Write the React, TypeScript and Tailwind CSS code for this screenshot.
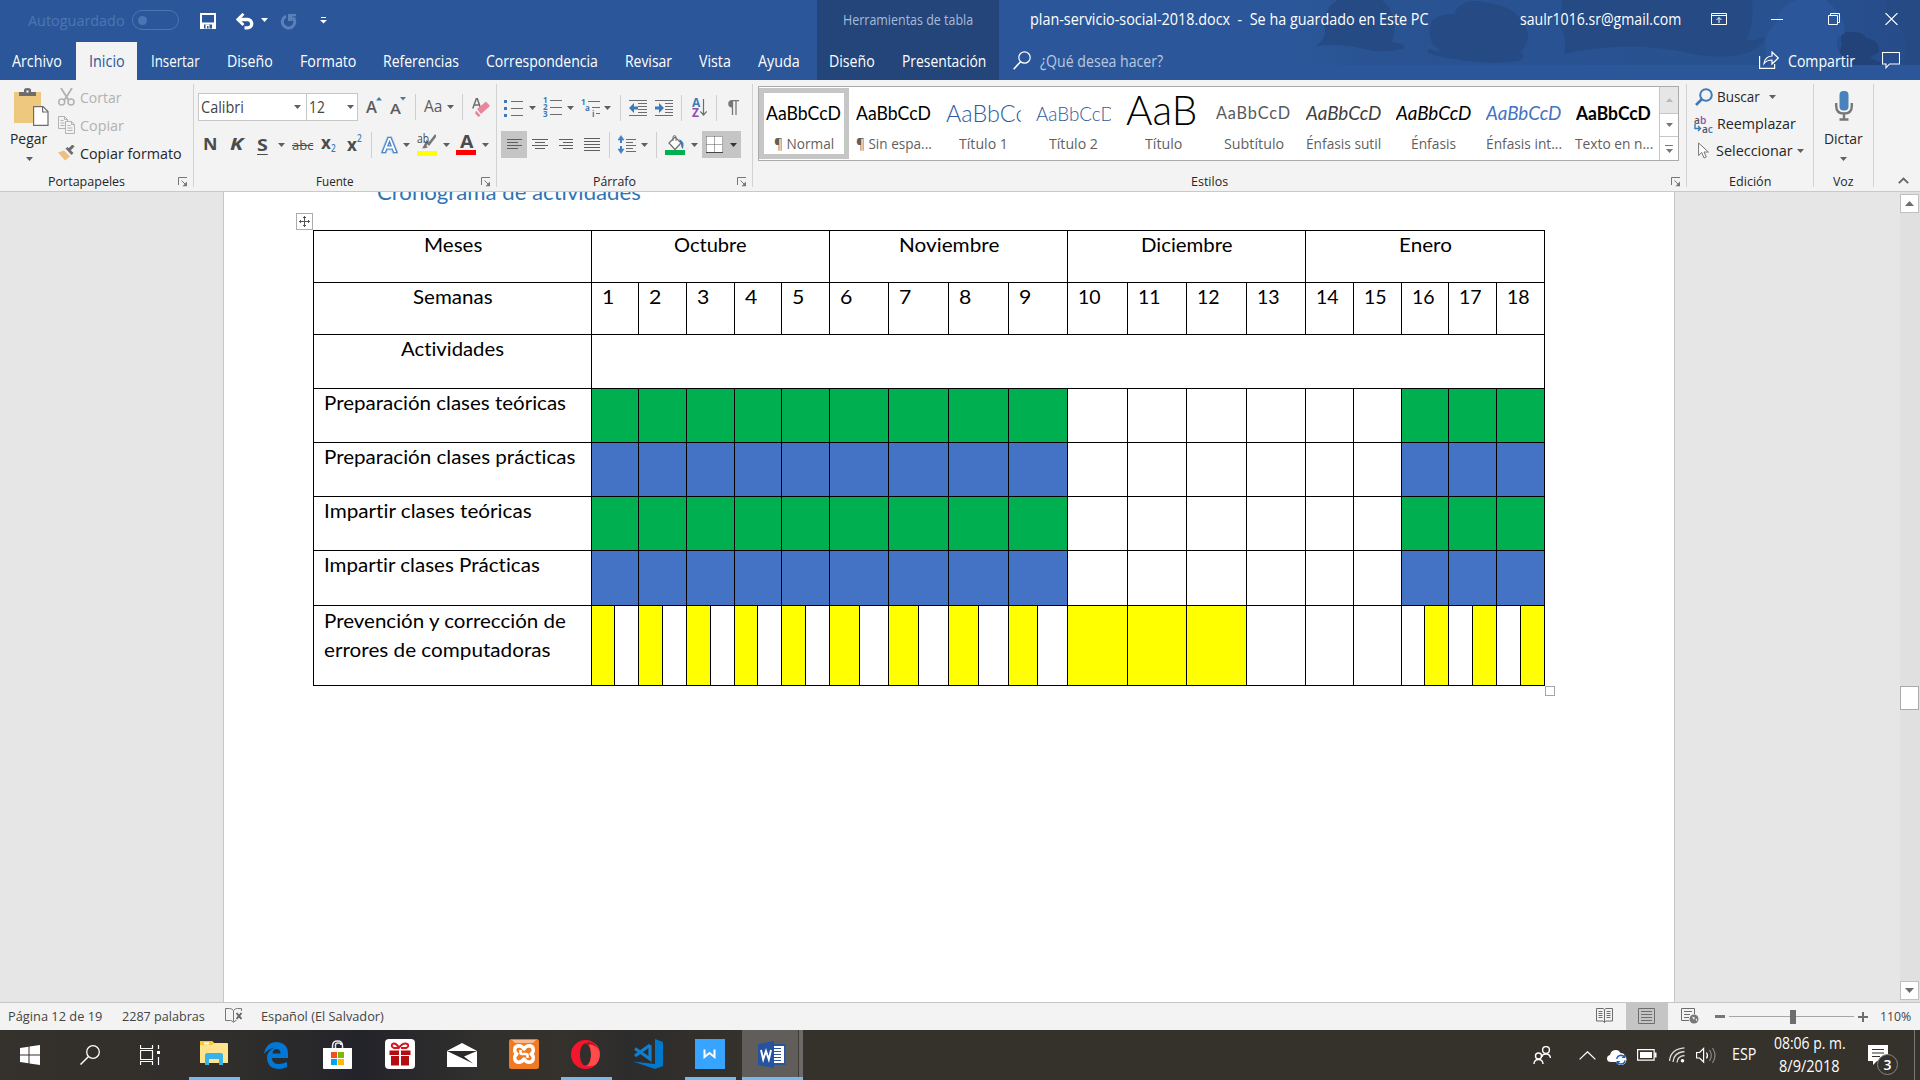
import { useLayoutEffect, useRef, useState, type ReactNode } from "react";

/** Single line of text, condensed or widened to an exact measure. */
function T({ w, children, className = "", inner = "" }: { w: number; children: ReactNode; className?: string; inner?: string }) {
  const ref = useRef<HTMLSpanElement>(null);
  const [scale, setScale] = useState(1);
  useLayoutEffect(() => {
    if (ref.current) setScale(w / ref.current.offsetWidth);
  }, [w]);
  return (
    <span className={"block shrink-0 whitespace-pre " + className} style={{ width: w }}>
      <span ref={ref} className={"inline-block origin-left " + inner} style={{ transform: `scaleX(${scale})` }}>
        {children}
      </span>
    </span>
  );
}

function Caret({ className = "", fill = "#5f5f5f" }: { className?: string; fill?: string }) {
  return (
    <svg width="7" height="4" viewBox="0 0 7 4" className={"shrink-0 " + className}>
      <path d="M0 0h7L3.5 4z" fill={fill} />
    </svg>
  );
}

function Svg({ w, h, className = "", children }: { w: number; h: number; className?: string; children: ReactNode }) {
  return (
    <svg width={w} height={h} viewBox={`0 0 ${w} ${h}`} fill="none" className={"shrink-0 " + className}>
      {children}
    </svg>
  );
}

const Bar = ({ className = "" }: { className?: string }) => (
  <div className={"h-[26px] w-px shrink-0 bg-[#cfcfcf] " + className} />
);
const Divider = () => <div className="mt-1 h-[103px] w-px shrink-0 bg-[#d2d2d2]" />;

function Group({ width, label, labelW, launcher = true, children }: { width: string; label: string; labelW: number; launcher?: boolean; children: ReactNode }) {
  return (
    <div className={"flex shrink-0 flex-col " + width}>
      <div className="h-[92px]">{children}</div>
      <div className="flex h-[19px] items-center">
        <div className="flex flex-1 justify-center">
          <T w={labelW} className="text-[13.5px] leading-[19px] text-[#262626]">{label}</T>
        </div>
        {launcher && (
          <div className="flex w-5 pl-[5px]">
            <Svg w={10} h={10}>
              <path d="M.5 8V.5H9M3.500 3.500l4.500 4.500" stroke="#777" />
              <path d="M9 4.500V9.200H4.500z" fill="#777" />
            </Svg>
          </div>
        )}
      </div>
    </div>
  );
}

function TitleArt() {
  return (
    <svg className="absolute right-0 top-0" width="640" height="65" viewBox="0 0 640 65">
      <defs>
        <linearGradient id="art" x1="0" x2="1">
          <stop offset="0" stopColor="#2b579a" />
          <stop offset=".15" stopColor="#295392" />
          <stop offset=".8" stopColor="#285190" />
          <stop offset="1" stopColor="#264c88" />
        </linearGradient>
      </defs>
      <rect width="640" height="65" fill="url(#art)" />
      <g fill="#254a84">
        <path d="M36 46q12-8 8-22 0-16 14-24h44q18 16 10 42 14 2 12 6-18 6-40 1-22-6-48-3z" />
        <path d="M150 36q-4-22 24-22 8-18 34-11 34 4 40 32 0 10-8 17 8 4-2 9-34 5-80-5-14-4-9-7 8 3 14 3-12-6-13-16z" />
        <path d="M282 0h190q2 26-6 40 10 2 18-4 2 10-20 18-26 6-60-2-60-12-120 2 4-18-4-26z" />
        <path d="M562 44q-4-14 10-12 12 0 14 6 14 2 13 14l-10 6q14 4 12 7h-38q-10-6-4-12z" fill="#21437a" />
        <path d="M606 0h34v65h-18q12-20-2-38-16-12-14-27z" />
      </g>
      <path d="M488 65q-8-30 8-42 4-18 20-23h30q22 20 18 34-10 2-6 16l10 15z" fill="#2b579a" />
    </svg>
  );
}

const TABS: [string, number, string][] = [
  ["Insertar", 49, "ml-[14px]"],
  ["Diseño", 46, "ml-[27px]"],
  ["Formato", 56, "ml-[27px]"],
  ["Referencias", 76, "ml-[27px]"],
  ["Correspondencia", 112, "ml-[27px]"],
  ["Revisar", 47, "ml-[27px]"],
  ["Vista", 32, "ml-[27px]"],
  ["Ayuda", 42, "ml-[27px]"],
];

function Header() {
  return (
    <header className="relative h-20 bg-[#2b579a] text-white">
      <TitleArt />
      <div className="relative flex h-10">
        <div className="flex w-[817px] items-center">
          <T w={97} className="ml-7 text-[15px] text-[#4b76b3]">Autoguardado</T>
          <div className="ml-[7px] flex h-5 w-[47px] items-center rounded-full border border-[#4b76b3] pl-[5px]">
            <div className="size-[9px] rounded-full bg-[#4b76b3]" />
          </div>
          <Svg w={16} h={16} className="ml-[21px] mt-0.5">
            <path d="M1 1h14v14H1z" stroke="#fff" strokeWidth="2" />
            <path d="M1 9.500h14V16H1z" fill="#fff" />
            <path d="M4 11.500h8v4H4z" fill="#2b579a" />
            <path d="M5.500 11.500h4v4h-1v-2.500H7v2.500H5.500z" fill="#fff" />
          </Svg>
          <Svg w={19} h={17} className="ml-5 mt-0.5">
            <path d="M2 6.500h9.500a4.200 4.200 0 0 1 0 8.400H8.500" stroke="#fff" strokeWidth="3.400" />
            <path d="M7.500.8L1.800 6.500L7.500 12" stroke="#fff" strokeWidth="2.800" />
          </Svg>
          <Caret className="ml-[6px]" fill="#fff" />
          <Svg w={17} h={17} className="ml-[12px] mt-0.5">
            <path d="M6 3.200A6.200 6.200 0 1 0 13 4.500" stroke="#5b81b9" strokeWidth="3" />
            <path d="M8 1h8v2.200h-3.500V8H8z" fill="#5b81b9" />
          </Svg>
          <Svg w={7} h={7} className="ml-[23px]">
            <path d="M1 .5h5" stroke="#fff" /><path d="M0 3h7L3.500 6.500z" fill="#fff" />
          </Svg>
        </div>
        <div className="flex w-[182px] items-center justify-center bg-[#23457a]">
          <T w={130} className="-mt-[2px] text-[14px] text-[#a9bbd8]">Herramientas de tabla</T>
        </div>
        <div className="flex flex-1 items-center">
          <T w={399} className="ml-[31px] text-[15.5px]">plan-servicio-social-2018.docx  -  Se ha guardado en Este PC</T>
          <T w={161} className="ml-[91px] text-[15.5px]">saulr1016.sr@gmail.com</T>
          <Svg w={16} h={12} className="-mt-[2px] ml-[30px]">
            <path d="M.5.5h15v11H.5zM.5 2.500h15M8 10V4.500M5.500 7L8 4.500L10.500 7" stroke="#fff" />
          </Svg>
          <div className="-mt-[2px] ml-[44px] h-px w-3 bg-white" />
          <Svg w={12} h={12} className="-mt-[2px] ml-[45px]">
            <path d="M.5 2.500h9v9h-9zM2.500 2V.5h9v9H10" stroke="#fff" />
          </Svg>
          <Svg w={13} h={12} className="-mt-[2px] ml-[45px]">
            <path d="M.5 0l12 12M12.500 0l-12 12" stroke="#fff" strokeWidth="1.100" />
          </Svg>
        </div>
      </div>
      <div className="relative flex h-10 text-[16px]">
        <div className="flex w-[817px] items-center">
          <T w={50} className="ml-3 mt-px">Archivo</T>
          <div className="ml-[14px] mt-[2px] flex h-[38px] w-[61px] items-center justify-center bg-[#f3f3f3] text-[#2b579a]">
            <T w={36} className="-mt-px">Inicio</T>
          </div>
          {TABS.map(([name, w, ml]) => (
            <div key={name} className={"mt-px " + ml}><T w={w}>{name}</T></div>
          ))}
        </div>
        <div className="flex w-[182px] items-center bg-[#23457a]">
          <T w={46} className="ml-3 mt-px">Diseño</T>
          <T w={84} className="ml-[27px] mt-px">Presentación</T>
        </div>
        <div className="flex flex-1 items-center">
          <Svg w={18} h={19} className="ml-[14px]">
            <circle cx="11.500" cy="6.500" r="5.700" stroke="#fff" strokeWidth="1.200" />
            <path d="M7.500 10.700L.7 18.300" stroke="#fff" strokeWidth="1.500" />
          </Svg>
          <T w={123} className="ml-[9px] mt-[3px] text-[15.5px] text-[#b8c8e0]">¿Qué desea hacer?</T>
          <Svg w={20} h={18} className="ml-[596px]">
            <path d="M.6 5v12.400h15V13" stroke="#fff" strokeWidth="1.200" />
            <path d="M5 12.500q1-7 8-7.500V1l6.300 6L13 13V9q-5 0-8 3.500z" stroke="#fff" strokeWidth="1.200" />
          </Svg>
          <T w={67} className="ml-[9px] mt-px">Compartir</T>
          <Svg w={18} h={17} className="ml-[27px]">
            <path d="M.5.5h17v11.500H7.500L4 15.800V12H.5z" stroke="#fff" strokeWidth="1.100" />
          </Svg>
        </div>
      </div>
    </header>
  );
}

function Clipboard() {
  return (
    <Group width="w-[193px]" label="Portapapeles" labelW={77}>
      <div className="flex">
        <div className="flex w-[58px] flex-col items-center">
          <Svg w={35} h={38} className="ml-[5px] mt-2">
            <path d="M0 4h27v31H0z" fill="#edc87e" />
            <path d="M5 8V4h5V2q0-2 3.500-2T17 2v2h5v4z" fill="#6d6d6d" />
            <path d="M12.500 2.500h2v2h-2z" fill="#fff" />
            <path d="M19.600 18.600h9.400l5 5v13.800H19.600z" fill="#fff" stroke="#6d6d6d" strokeWidth="1.200" />
            <path d="M28.600 18.600v5.400h5.400" stroke="#6d6d6d" strokeWidth="1.200" />
          </Svg>
          <T w={37} className="mr-[1px] mt-px text-[15px] leading-[22px] text-[#262626]">Pegar</T>
          <Caret className="mt-[8px]" />
        </div>
        <div className="mt-[3px] flex flex-col text-[15px] text-[#b1b1b1]">
          <div className="flex h-7 items-center">
            <Svg w={17} h={18}>
              <path d="M3 0l7.500 12M14 0L6.500 12" stroke="#b1b1b1" strokeWidth="1.800" />
              <circle cx="3.700" cy="14" r="3" stroke="#b1b1b1" strokeWidth="1.500" />
              <circle cx="13" cy="14" r="3" stroke="#b1b1b1" strokeWidth="1.500" />
            </Svg>
            <T w={41} className="ml-[5px]">Cortar</T>
          </div>
          <div className="flex h-7 items-center">
            <Svg w={17} h={18}>
              <path d="M7 12.500H.5V.5h6l3 3V5M6.500.5v3h3M2.500 4.500h3M2.500 7h4M2.500 9.500h4" stroke="#b4b0b6" />
              <path d="M7.500 5.500h6l3 3v9h-9zM13.500 5.500v3h3M9.500 9.500h3M9.500 12h5M9.500 14.500h5" stroke="#b4b0b6" fill="#f6f3f7" />
            </Svg>
            <T w={44} className="ml-[5px]">Copiar</T>
          </div>
          <div className="flex h-7 items-center text-[#262626]">
            <Svg w={17} h={16}>
              <path d="M0 7.500L6 5.500L12 11.500L7 15.500z" fill="#edc080" />
              <path d="M7.500 3.500L9.500 2l6 6l-2 2z" fill="#6d6d6d" />
              <path d="M10.500 5.500l5-5" stroke="#6d6d6d" strokeWidth="3" />
            </Svg>
            <T w={102} className="ml-[5px]">Copiar formato</T>
          </div>
        </div>
      </div>
    </Group>
  );
}

function FontGroup() {
  return (
    <Group width="w-[302px]" label="Fuente" labelW={38}>
      <div className="flex h-[41px] items-end">
        <div className="flex h-7 w-full items-center text-[#5c5c5c]">
          <div className="ml-1 flex h-7 w-[109px] items-center border border-[#c6c6c6] bg-white">
            <T w={43} className="ml-[2px] mt-px text-[15.5px] text-[#444]">Calibri</T>
            <Caret className="ml-[50px]" />
          </div>
          <div className="-ml-px flex h-7 w-[52px] items-center border border-[#c6c6c6] bg-white">
            <T w={16} className="ml-[2px] mt-px text-[15.5px] text-[#444]">12</T>
            <Caret className="ml-[22px]" />
          </div>
          <T w={11} className="ml-[8px] text-[16.500px] font-semibold">A</T>
          <Svg w={6} h={4} className="-ml-px -mt-[16px]"><path d="M0 3.500L3 0L6 3.500z" fill="#3f7ab8" /></Svg>
          <T w={11} className="ml-[8px] mt-[2px] text-[15px] font-semibold">A</T>
          <Svg w={6} h={4} className="-ml-px -mt-[16px]"><path d="M0 0h6L3 3.500z" fill="#3f7ab8" /></Svg>
          <Bar className="ml-[9px]" />
          <T w={18} className="ml-[8px] text-[15.500px]">Aa</T>
          <Caret className="ml-[5px]" />
          <Bar className="ml-[8px]" />
          <Svg w={18} h={19} className="ml-[9px]">
            <path d="M.8 10.500L4.300.8h1L8.500 10M2 7h5.500" stroke="#6d6d6d" strokeWidth="1.500" />
            <path d="M5 11l9-7.500 4 4.500-9 8z" fill="#e8879a" />
            <path d="M4 12.500l4.500 5-2 1.500-3.500-3.500z" fill="#e8879a" />
          </Svg>
        </div>
      </div>
      <div className="mt-[10px] flex h-[27px] items-center text-[#4c4c4c]">
        <T w={14} className="ml-[9px] text-[16.500px] font-bold">N</T>
        <T w={13} className="ml-[13px] text-[16.500px] font-bold italic">K</T>
        <T w={11} className="ml-[14px] text-[16px] font-bold" inner="underline underline-offset-[3px]">S</T>
        <Caret className="ml-[10px]" />
        <T w={21} className="ml-[7px] mt-[2px] text-[13px]" inner="line-through">abc</T>
        <div className="ml-[8px] flex">
          <T w={10} className="text-[17px] font-bold leading-5">x</T>
          <T w={5} className="mt-[7px] text-[10px] font-semibold leading-4 text-[#3f7ab8]">2</T>
        </div>
        <div className="ml-[11px] flex">
          <T w={10} className="text-[17px] font-bold leading-5">x</T>
          <T w={5} className="-mt-[5px] text-[10px] font-semibold leading-4 text-[#3f7ab8]">2</T>
        </div>
        <Bar className="ml-[9px]" />
        <Svg w={17} h={18} className="ml-[9px]">
          <path d="M1 16.500L7 1.500h3l6 15h-3.500L11.300 13H5.700L4.500 16.500zM6.800 10h3.400L8.500 5.500z" stroke="#b9d4f0" strokeWidth="2.800" />
          <path d="M1 16.500L7 1.500h3l6 15h-3.500L11.300 13H5.700L4.500 16.500zM6.800 10h3.400L8.500 5.500z" stroke="#4c86c6" strokeWidth="1.200" fill="#fff" />
        </Svg>
        <Caret className="ml-[5px]" />
        <div className="ml-[7px] flex h-[22px] w-5 flex-col">
          <div className="flex h-[15px]">
            <T w={12} className="text-[13px] leading-[8px]">ab</T>
            <Svg w={14} h={15} className="-ml-[7px]">
              <path d="M2 14L5 8l2 2L14 1" stroke="#777" strokeWidth="2.600" /><path d="M0 14.500l3-4 3 3z" fill="#777" />
            </Svg>
          </div>
          <div className="mt-[2px] h-[5px] bg-[#ffff00]" />
        </div>
        <Caret className="ml-[6px]" />
        <div className="ml-[6px] flex h-[20px] w-5 flex-col items-center">
          <T w={13} className="h-[15px] text-[18px] font-bold leading-[12px]">A</T>
          <div className="h-[5px] w-5 shrink-0 bg-[#ff0000]" />
        </div>
        <Caret className="ml-[6px]" />
      </div>
    </Group>
  );
}

function AlignIcon({ w, d }: { w: number; d: string }) {
  return <Svg w={w} h={13}><path d={d} stroke="#5f5f5f" strokeWidth="1" /></Svg>;
}

function Paragraph() {
  return (
    <Group width="w-[255px]" label="Párrafo" labelW={43}>
      <div className="flex h-[54px] items-center pt-px">
        <Svg w={19} h={18} className="ml-[7px]">
          <path d="M7 2.500h12M7 9.500h12M7 16.500h12" stroke="#6d6d6d" />
          <path d="M0 1h3v3H0zM0 8h3v3H0zM0 15h3v3H0z" fill="#3f7ab8" />
        </Svg>
        <Caret className="ml-[6px]" />
        <div className="ml-[7px] flex w-[19px] items-center">
          <div className="flex flex-col text-[8px] font-bold leading-[6.700px] text-[#3f7ab8]"><span>1</span><span>2</span><span>3</span></div>
          <Svg w={12} h={18} className="ml-[2px]"><path d="M0 2.500h12M0 9.500h12M0 16.500h12" stroke="#6d6d6d" /></Svg>
        </div>
        <Caret className="ml-[5px]" />
        <div className="ml-[7px] flex w-[19px] flex-col text-[8px] font-bold leading-[6px] text-[#3f7ab8]">
          <div className="flex items-center">1<span className="ml-[2px] h-px w-3 bg-[#6d6d6d]" /></div>
          <div className="ml-[4px] flex items-center">a<span className="ml-[2px] h-px w-2 bg-[#6d6d6d]" /></div>
          <div className="ml-[11px] flex items-center">i<span className="ml-[2px] h-px w-1 bg-[#6d6d6d]" /></div>
        </div>
        <Caret className="ml-[4px]" />
        <Bar className="ml-[9px]" />
        <Svg w={18} h={16} className="ml-[8px]">
          <path d="M0 .5h18M9 3.500h9M9 6.500h9M9 9.500h9M9 12.500h9M0 15.500h18" stroke="#6d6d6d" />
          <path d="M0 8L5 3v3.500h4v3H5V13z" fill="#3f7ab8" />
        </Svg>
        <Svg w={18} h={16} className="ml-[8px]">
          <path d="M0 .5h18M10 3.500h8M10 6.500h8M10 9.500h8M10 12.500h8M0 15.500h18" stroke="#6d6d6d" />
          <path d="M9 8L4 3v3.500H0v3h4V13z" fill="#3f7ab8" />
        </Svg>
        <Bar className="ml-[8px]" />
        <div className="ml-[10px] flex w-4 items-center">
          <div className="flex flex-col text-[12px] font-bold leading-[9.500px]">
            <span className="text-[#3f7ab8]">A</span><span className="text-[#8e4fae]">Z</span>
          </div>
          <Svg w={7} h={17}><path d="M3.500 0v16M.3 12.500l3.200 3.500 3.200-3.500" stroke="#6d6d6d" strokeWidth="1.200" /></Svg>
        </div>
        <Bar className="ml-[8px]" />
        <Svg w={12} h={15} className="ml-[10px]">
          <path d="M5 7.500a3.500 3.500 0 0 1 0-7.500h7v1.300H5z" fill="#777" />
          <path d="M5.500 1v14M9 1v14" stroke="#777" strokeWidth="1.300" />
        </Svg>
      </div>
      <div className="-mt-[3px] flex h-[27px] items-center">
        <div className="ml-1 flex h-[27px] w-[26px] items-center justify-center bg-[#c5c5c5]">
          <AlignIcon w={15} d="M0 1.500h15M0 4.500h11M0 7.500h15M0 10.500h11" />
        </div>
        <div className="ml-[5px]"><AlignIcon w={16} d="M0 1.500h16M3 4.500h10M0 7.500h16M3 10.500h10" /></div>
        <div className="ml-[11px]"><AlignIcon w={14} d="M0 1.500h14M4 4.500h10M0 7.500h14M4 10.500h10" /></div>
        <div className="ml-[11px]"><AlignIcon w={16} d="M0 .5h16M0 3.500h16M0 6.500h16M0 9.500h16M0 12.500h16" /></div>
        <Bar className="ml-[9px]" />
        <Svg w={18} h={19} className="ml-[8px]">
          <path d="M8 4.500h10M8 7.500h7M8 10.500h10M8 13.500h7M8 16.500h10" stroke="#6d6d6d" />
          <path d="M3 3v5M3 11v5" stroke="#4480c4" strokeWidth="2" />
          <path d="M0 5L3 .5l3 4.500zM0 14h6l-3 4.500z" fill="#4480c4" stroke="#4480c4" strokeWidth=".6" />
        </Svg>
        <Caret className="ml-[5px]" />
        <Bar className="ml-[8px]" />
        <Svg w={20} h={20} className="ml-[8px]">
          <path d="M0 15h20v5H0z" fill="#00b050" />
          <path d="M4 8l6-6 6 6-6 6.500z" fill="#fff" stroke="#6d6d6d" strokeWidth="1.200" />
          <path d="M8 6V1.500q1.500-2 3 0V6" stroke="#6d6d6d" />
          <path d="M14 4q6 2 4 10-2-1-2-5z" fill="#3f7ab8" />
        </Svg>
        <Caret className="ml-[6px]" />
        <div className="ml-[4px] flex h-[27px] w-[39px] items-center bg-[#c5c5c5]">
          <Svg w={17} h={17} className="ml-[4px]">
            <path d="M0 0h17v17H0z" fill="#fff" />
            <path d="M.5.5h16v16M.5.5v16M8.500.5v16M.5 8.500h16" stroke="#555" strokeDasharray="1 1" />
            <path d="M0 16.500h17" stroke="#444" />
          </Svg>
          <Caret className="ml-[7px]" fill="#333" />
        </div>
      </div>
    </Group>
  );
}

const STYLES: { name: string; nameW: number; text: string; w: number; cls: string }[] = [
  { name: "¶ Normal", nameW: 60, text: "AaBbCcD", w: 75, cls: "text-[19.5px] text-black font-['Lato',sans-serif]" },
  { name: "¶ Sin espa...", nameW: 76, text: "AaBbCcD", w: 75, cls: "text-[19.5px] text-black font-['Lato',sans-serif]" },
  { name: "Título 1", nameW: 49, text: "AaBbCc", w: 80, cls: "text-[24px] text-[#2f5aa0] font-['Lato',sans-serif] font-light" },
  { name: "Título 2", nameW: 49, text: "AaBbCcD", w: 79, cls: "text-[20.5px] text-[#2f5aa0] font-['Lato',sans-serif] font-light" },
  { name: "Título", nameW: 37, text: "AaB", w: 71, cls: "-mt-[7px] text-[41px] text-black font-['Lato',sans-serif] font-light" },
  { name: "Subtítulo", nameW: 60, text: "AaBbCcD", w: 75, cls: "text-[16.5px] text-[#5a5a5a] tracking-wider font-['Lato',sans-serif]" },
  { name: "Énfasis sutil", nameW: 75, text: "AaBbCcDc", w: 84, cls: "text-[19.5px] text-[#404040] italic font-['Lato',sans-serif]" },
  { name: "Énfasis", nameW: 45, text: "AaBbCcDc", w: 84, cls: "text-[19.5px] text-black italic font-['Lato',sans-serif]" },
  { name: "Énfasis int...", nameW: 76, text: "AaBbCcDc", w: 84, cls: "text-[19.5px] text-[#4472c4] italic font-['Lato',sans-serif]" },
  { name: "Texto en n...", nameW: 78, text: "AaBbCcD", w: 75, cls: "text-[19.5px] text-black font-bold font-['Lato',sans-serif]" },
];

function StylesGroup() {
  return (
    <Group width="w-[933px]" label="Estilos" labelW={37}>
      <div className="h-1.5" />
      <div className="ml-[5px] flex h-[75px] w-[921px] border border-[#ababab] bg-white">
        {STYLES.map((s, i) => (
          <div key={s.name} className={"mt-px flex h-[71px] w-[90px] shrink-0 flex-col items-center pr-px " + (i === 0 ? "border-[5px] border-[#c6c6c6]" : "border-[5px] border-transparent")}>
            <div className="mt-[3px] flex h-[31px] w-[75px] shrink-0 items-center overflow-hidden pt-[3px]">
              <T w={s.w} className={s.cls}>{s.text}</T>
            </div>
            <T w={s.nameW} className="mt-[6px] text-[15px] leading-[20px] text-[#5f5f5f]">{s.name}</T>
          </div>
        ))}
        <div className="flex w-[19px] shrink-0 flex-col border-l border-[#c6c6c6]">
          <div className="flex h-[26px] items-center justify-center bg-[#e6e6e6]"><Caret className="rotate-180" fill="#b8b8b8" /></div>
          <div className="flex h-6 items-center justify-center border-y border-[#c6c6c6]"><Caret fill="#777" /></div>
          <div className="flex flex-1 flex-col items-center justify-center gap-[3px]"><div className="h-px w-2 bg-[#777]" /><Caret fill="#777" /></div>
        </div>
      </div>
    </Group>
  );
}

function Ribbon() {
  return (
    <div className="flex h-28 border-b border-[#c9c9c9] bg-[#f3f3f3]">
      <Clipboard />
      <Divider />
      <FontGroup />
      <Divider />
      <Paragraph />
      <Divider />
      <StylesGroup />
      <Divider />
      <Group width="w-[126px]" label="Edición" labelW={42} launcher={false}>
        <div className="flex flex-col pl-2 pt-[3px] text-[15px] text-[#262626]">
          <div className="flex h-[27px] items-center">
            <Svg w={18} h={18}>
              <circle cx="11" cy="7" r="5.800" stroke="#3f7ab8" strokeWidth="2" /><path d="M7 11L1 17" stroke="#3f7ab8" strokeWidth="2.600" />
            </Svg>
            <T w={43} className="ml-1">Buscar</T>
            <Caret className="ml-[9px]" />
          </div>
          <div className="flex h-[27px] items-center">
            <div className="-ml-px flex w-[19px] flex-col text-[11px] font-semibold leading-[9px]">
              <T w={12}><span className="text-[#555]">a</span><span className="text-[#8e4fae]">b</span></T>
              <div className="flex">
                <Svg w={8} h={9}><path d="M1 0v4.500h5M4 2l2.500 2.500L4 7" stroke="#3f7ab8" strokeWidth="1.400" /></Svg>
                <T w={11}><span className="text-[#555]">a</span><span className="text-[#3f7ab8]">c</span></T>
              </div>
            </div>
            <T w={79} className="ml-1">Reemplazar</T>
          </div>
          <div className="flex h-[27px] items-center">
            <Svg w={11} h={17} className="ml-[3px]">
              <path d="M.6 1v12.500l3.200-3 2.200 5.500 2.300-1-2.300-5h4.400z" stroke="#777" fill="#fff" />
            </Svg>
            <T w={77} className="ml-[7px]">Seleccionar</T>
            <Caret className="ml-[4px]" />
          </div>
        </div>
      </Group>
      <Divider />
      <Group width="w-[59px]" label="Voz" labelW={21} launcher={false}>
        <div className="flex flex-col items-center">
          <Svg w={18} h={30} className="mt-[11px]">
            <path d="M1.200 12v3q0 7.500 7.800 7.500t7.800-7.500v-3M9 22v6M4.500 28.500h9" stroke="#777" strokeWidth="2.400" />
            <rect x="4.500" width="9" height="19.500" rx="4" fill="#4a82bd" />
          </Svg>
          <T w={39} className="mt-[6px] text-[15px] leading-[22px] text-[#262626]">Dictar</T>
          <Caret className="mt-[8px]" />
        </div>
      </Group>
      <Divider />
      <div className="flex flex-1 items-end pb-[7px] pl-[24px]">
        <Svg w={11} h={7}><path d="M.8 6.200L5.500 1.500l4.700 4.700" stroke="#666" strokeWidth="1.800" /></Svg>
      </div>
    </div>
  );
}

const LINES = [591, 638, 686, 734, 781, 829, 888, 948, 1008, 1067, 1127, 1186, 1246, 1305, 1353, 1401, 1448, 1496, 1544];
const MIDS: Record<number, number> = { 0: 614, 1: 662, 2: 710, 3: 757, 4: 805, 5: 859, 6: 918, 7: 978, 8: 1037, 15: 1424, 16: 1472, 17: 1520 };
const WEEKS = Array.from({ length: 18 }, (_, i) => i);
const LABEL_W = 278;

function Cell({ w, className = "", children }: { w: number; className?: string; children?: ReactNode }) {
  return (
    <div className={"h-full shrink-0 border-b border-r border-black " + className} style={{ width: w }}>
      {children}
    </div>
  );
}

const Centered = ({ w, text, tw }: { w: number; text: string; tw: number }) => (
  <Cell w={w} className="flex justify-center"><T w={tw}>{text}</T></Cell>
);

function TaskRow({ label, w, busy }: { label: string; w: number; busy: string }) {
  return (
    <>
      <Cell w={LABEL_W} className="pl-[10px]"><T w={w}>{label}</T></Cell>
      {WEEKS.map((i) => (
        <Cell key={i} w={LINES[i + 1] - LINES[i]} className={i < 9 || i > 14 ? busy : ""} />
      ))}
    </>
  );
}

function Schedule() {
  return (
    <div className="ml-[89px] w-[1232px] border-l border-t border-black text-[19.500px] leading-[28px] text-black [font-variant-ligatures:none] font-['Lato',sans-serif]">
      <div className="flex h-[52px]">
        <Centered w={LABEL_W} text="Meses" tw={58} />
        <Centered w={238} text="Octubre" tw={73} />
        <Centered w={238} text="Noviembre" tw={100} />
        <Centered w={238} text="Diciembre" tw={92} />
        <Centered w={239} text="Enero" tw={53} />
      </div>
      <div className="flex h-[52px]">
        <Centered w={LABEL_W} text="Semanas" tw={80} />
        {WEEKS.map((i) => (
          <Cell key={i} w={LINES[i + 1] - LINES[i]} className="pl-[10px]"><T w={i < 9 ? 12 : 23}>{i + 1}</T></Cell>
        ))}
      </div>
      <div className="flex h-[54px]">
        <Centered w={LABEL_W} text="Actividades" tw={103} />
        <Cell w={953} />
      </div>
      <div className="flex h-[54px]"><TaskRow label="Preparación clases teóricas" w={242} busy="bg-[#00b050]" /></div>
      <div className="flex h-[54px]"><TaskRow label="Preparación clases prácticas" w={251} busy="bg-[#4472c4]" /></div>
      <div className="flex h-[54px]"><TaskRow label="Impartir clases teóricas" w={208} busy="bg-[#00b050]" /></div>
      <div className="flex h-[55px]"><TaskRow label="Impartir clases Prácticas" w={216} busy="bg-[#4472c4]" /></div>
      <div className="flex h-[80px]">
        <Cell w={LABEL_W} className="pl-[10px] leading-[29px]">
          <T w={242}>Prevención y corrección de</T>
          <T w={227}>errores de computadoras</T>
        </Cell>
        {WEEKS.map((i) => {
          const [a, b, mid] = [LINES[i], LINES[i + 1], MIDS[i]];
          if (!mid) return <Cell key={i} w={b - a} className={i < 12 ? "bg-[#ffff00]" : ""} />;
          return (
            <div key={i} className="flex h-full shrink-0">
              <Cell w={mid - a} className={i < 9 ? "bg-[#ffff00]" : ""} />
              <Cell w={b - mid} className={i > 9 ? "bg-[#ffff00]" : ""} />
            </div>
          );
        })}
      </div>
    </div>
  );
}

function Document() {
  return (
    <main className="flex h-[810px] overflow-hidden bg-[#e6e6e6]">
      <div className="ml-[223px] h-full w-[1452px] shrink-0 overflow-hidden border-x border-[#c6c6c6] bg-white">
        <div className="h-[21px] overflow-hidden">
          <T w={264} className="-mt-[14px] ml-[153px] text-[21px] leading-[28px] text-[#2e74b5] [font-variant-ligatures:none] font-['Lato',sans-serif]">Cronograma de actividades</T>
        </div>
        <div className="ml-[72px] flex size-[17px] items-center justify-center border border-[#ababab]">
          <Svg w={11} h={11}>
            <path d="M5.500 0v11M0 5.500h11M4 1.500h3M4 9.500h3M1.500 4v3M9.500 4v3" stroke="#555" />
          </Svg>
        </div>
        <Schedule />
        <div className="ml-[1321px] size-[10px] border border-[#a5a5a5] bg-white" />
      </div>
      <div className="ml-auto flex w-5 flex-col items-start bg-[#e0e0e0] py-[2px]">
        <div className="flex h-[19px] w-[19px] items-center justify-center border border-[#c0c0c0] bg-white">
          <Svg w={9} h={5}><path d="M0 5L4.500 0L9 5z" fill="#6d6d6d" /></Svg>
        </div>
        <div className="mt-[473px] h-6 w-[19px] border border-[#ababab] bg-white" />
        <div className="mt-auto flex h-[19px] w-[19px] items-center justify-center border border-[#c0c0c0] bg-white">
          <Svg w={9} h={5}><path d="M0 0h9L4.500 5z" fill="#6d6d6d" /></Svg>
        </div>
      </div>
    </main>
  );
}

function StatusBar() {
  return (
    <div className="flex h-7 items-center border-t border-[#c6c6c6] bg-[#f3f3f3] text-[13.500px] text-[#444]">
      <T w={94} className="ml-2">Página 12 de 19</T>
      <T w={83} className="ml-5">2287 palabras</T>
      <Svg w={18} h={15} className="ml-5 -mt-[2px]">
        <path d="M8.500 13.500V2.500Q7 .5 4.500.5h-4v12h5q2 0 3 2 1-2 3-2M8.500 2.500Q10 .5 12.500.5h4V3" stroke="#777" />
        <path d="M11.500 5l5 6M16.500 5l-5 6" stroke="#666" strokeWidth="1.900" />
      </Svg>
      <T w={123} className="ml-[18px]">Español (El Salvador)</T>
      <Svg w={17} h={15} className="ml-auto -mt-[2px]">
        <path d="M8.500 2v13M.5.500h6.500l1.500 1 1.500-1h6.500v12.500H10l-1.500 1-1.500-1H.5zM2.500 3.500h4M2.500 5.500h4M2.500 7.500h4M2.500 9.500h4M10.500 3.500h4M10.500 5.500h4M10.500 7.500h4M10.500 9.500h4" stroke="#6d6d6d" />
      </Svg>
      <div className="ml-[13px] flex h-[27px] w-[42px] items-center justify-center bg-[#c5c5c5]">
        <Svg w={17} h={16} className="-mt-px mr-px"><path d="M.5.5h16v15H.5zM3 3.500h11M3 6.500h11M3 9.500h11M3 12.500h11" stroke="#6d6d6d" /></Svg>
      </div>
      <Svg w={18} h={16} className="ml-[13px] -mt-px">
        <path d="M8 12.500H.5V.5h13V6M3 3.500h8M3 6.500h6M3 9.500h5" stroke="#6d6d6d" />
        <circle cx="13" cy="11" r="4.500" fill="#777" /><path d="M11 8.500l3 1-1 2.500zM14.500 11.500l1.500-1v3z" fill="#f3f3f3" />
      </Svg>
      <div className="ml-4 h-[3px] w-[10px] bg-[#777]" />
      <div className="ml-1 flex w-[125px] items-center">
        <div className="h-px w-[61px] bg-[#a6a6a6]" />
        <div className="h-[14px] w-[6px] bg-[#6d6d6d]" />
        <div className="h-px flex-1 bg-[#a6a6a6]" />
      </div>
      <Svg w={10} h={10} className="ml-1"><path d="M5 0v10M0 5h10" stroke="#6d6d6d" strokeWidth="2" /></Svg>
      <T w={31} className="ml-3 mr-[9px]">110%</T>
    </div>
  );
}

function Task({ open = false, children }: { open?: boolean; children: ReactNode }) {
  return (
    <div className="flex h-full w-[62px] shrink-0 flex-col items-center">
      <div className="flex h-[47px] items-center pt-[3px]">{children}</div>
      {open && <div className="h-[3px] w-[51px] bg-[#76b9ed]" />}
    </div>
  );
}

function Taskbar() {
  return (
    <footer className="flex h-[50px] bg-[linear-gradient(90deg,#35312b_0px,#302e2b_240px,#23232a_360px,#302f2d_470px,#35322c_560px,#2d2c2c_630px,#35312b_740px,#35312b_100%)] text-white">
      <div className="flex w-[183px] items-center">
        <Svg w={20} h={20} className="ml-5">
          <path d="M0 3l8.500-1.200v7.700H0zM9.500 1.600L20 0v9.500H9.500zM0 10.500h8.500v7.700L0 17zM9.500 10.500H20V20L9.500 18.400z" fill="#fff" />
        </Svg>
        <Svg w={20} h={20} className="ml-10">
          <circle cx="13" cy="7" r="6.300" stroke="#fff" strokeWidth="1.300" /><path d="M8.500 11.500L.5 19.500" stroke="#fff" strokeWidth="1.500" />
        </Svg>
        <Svg w={20} h={20} className="ml-10">
          <path d="M.5 0v3.500h12V0M.5 20v-3.500h12V20M.5 5.500h12v9H.5zM18.500 0v4M18.500 12v8" stroke="#fff" strokeWidth="1.200" />
          <path d="M17 6h3v3h-3z" fill="#fff" />
        </Svg>
      </div>
      <Task open>
        <Svg w={28} h={24} className="-mt-1">
          <path d="M0 1q0-1 1-1h11l2 2h13q1 0 1 1v19H0z" fill="#ffe48f" />
          <path d="M0 1q0-1 1-1h11l2 2-2 2H0z" fill="#fbc82e" /><path d="M4 1.500h5v2H4z" fill="#fff" />
          <path d="M5 24V14q0-2 2-2h14q2 0 2 2v10h-4v-6H9v6z" fill="#38b3e8" />
        </Svg>
      </Task>
      <Task>
        <Svg w={24} h={27}>
          <path d="M0 12Q2 0 13 0q11 1 11 12v4H8q0 6 7 6 4 0 8-2v5q-4 2-9 2Q3 26 3 16q0-7 7-10-5 0-10 6zM8.500 11.500h8q0-4.500-4-4.500-3.500 0-4 4.500z" fill="#0078d7" />
        </Svg>
      </Task>
      <Task>
        <Svg w={29} h={29} className="-ml-px -mt-0.5">
          <path d="M9.500 9V6q0-5 5-5t5 5v3M12.500 9V5q0-2 2.500-2 3 0 3 2" stroke="#e8e8e8" strokeWidth="1.500" />
          <path d="M0 8h29v20q0 1-1 1H1q-1 0-1-1z" fill="#fff" />
          <path d="M8 12h6v6H8z" fill="#f25022" /><path d="M15 12h6v6h-6z" fill="#7fba00" />
          <path d="M8 19h6v6H8z" fill="#00a4ef" /><path d="M15 19h6v6h-6z" fill="#ffb900" />
        </Svg>
      </Task>
      <Task>
        <Svg w={30} h={30} className="-mt-0.5">
          <rect width="30" height="30" rx="4" fill="#fff" />
          <path d="M14 9H9q-3-1-2-3.500 3-3 7 3 5-6 9-3Q24 8 21 9h-5" stroke="#d6161c" strokeWidth="2" />
          <path d="M4.500 11.500h9.500V16H4.500zM16 11.500h9.500V16H16zM6 17h8v9.500H6zM16 17h8v9.500h-8z" fill="#b30d12" />
        </Svg>
      </Task>
      <Task>
        <Svg w={30} h={24}><path d="M0 8L15 0l15 8v16H0z" fill="#fff" /><path d="M0 8h30L17 13.500l9 7z" fill="#2b2a2a" /><path d="M1 7.500h28L15 .8z" fill="#fff" /></Svg>
      </Task>
      <Task>
        <Svg w={30} h={30} className="-mt-0.5">
          <rect width="30" height="30" rx="2.500" fill="#f07a22" /><path d="M3 1h24l-3 3H6z" fill="#f9b98a" />
          <path d="M15 10Q13 6.800 9.700 6.800 5.700 7 5.700 11q0 2.700 2.300 4-2.300 1.500-2.300 4 0 4 4 4.300Q13 23.300 15 20q2 3.300 5.300 3.300 4-.300 4-4.300 0-2.500-2.300-4 2.300-1.300 2.300-4 0-4-4-4.200Q17 6.800 15 10z" stroke="#fff" strokeWidth="3.400" strokeLinejoin="round" />
          <path d="M11.500 11v2.500q0 1.500 1.500 1.500h4q1.500 0 1.500 1.500V19" stroke="#fff" strokeWidth="2.600" />
        </Svg>
      </Task>
      <Task open>
        <Svg w={29} h={29} className="-ml-px -mt-0.5">
          <path fillRule="evenodd" d="M14.500 0a14.500 14.500 0 1 0 0 29 14.500 14.500 0 1 0 0-29zM14.500 3.500c3.500 0 5.500 5 5.500 11s-2 11-5.500 11-5.500-5-5.500-11 2-11 5.500-11z" fill="#f5152c" />
          <path d="M14.500 3.500Q20 3 24.300 4a14.500 14.500 0 0 1 0 21Q20 27 14.500 25.500c3.500 0 5.500-5 5.500-11s-2-11-5.500-11z" fill="#ff4b4b" />
          <path d="M14.500 3.500Q17 1 24 4l4 6Q22 3 17 5z" fill="#c10d1e" />
        </Svg>
      </Task>
      <Task>
        <Svg w={30} h={30} className="-mt-0.5">
          <path d="M22 0l8 3v24l-8 3L0 22.500l22 2.500z" fill="#0078cc" />
          <path d="M17 6v14L2 9.500M2 17L17 6" stroke="#0f7fd0" strokeWidth="3.200" />
        </Svg>
      </Task>
      <Task open>
        <Svg w={30} h={30} className="-mt-0.5">
          <path d="M0 0h30v30H0z" fill="#37a5ff" /><path d="M9.500 10.500V18l5-4 5 4v-7.500" stroke="#fff" strokeWidth="2" />
        </Svg>
      </Task>
      <div className="ml-px flex w-[61px] flex-col bg-[#605d5a]">
        <div className="flex h-[47px] items-center">
          <Svg w={28} h={27} className="ml-4 mt-px">
            <path d="M14 3h13.500v21H14z" fill="#2b579a" /><path d="M15 5h11v17H15z" fill="#fff" />
            <path d="M15 7.500h8M15 10.500h8M15 13.500h8M15 16.500h8M15 19.500h8" stroke="#2b579a" strokeWidth="1.200" />
            <path d="M0 3L16 0v27L0 24z" fill="#2653a0" />
            <path d="M3 9l2.200 9.500L8 10l2.800 8.500L13 9" stroke="#fff" strokeWidth="1.900" />
          </Svg>
          <div className="ml-auto h-[47px] w-[5px] border-l border-[#3c3935] bg-[#6c6966]" />
        </div>
        <div className="h-[3px] bg-[#76b9ed]" />
      </div>
      <div className="ml-auto flex items-center">
        <Svg w={18} h={19}>
          <circle cx="13" cy="4" r="3.400" stroke="#fff" strokeWidth="1.400" /><path d="M9 11q0-3 4-3t4.500 4" stroke="#fff" strokeWidth="1.400" />
          <circle cx="5.500" cy="10" r="3" stroke="#fff" strokeWidth="1.400" /><path d="M1 18q0-4.500 4.500-4.500T10 18" stroke="#fff" strokeWidth="1.400" />
        </Svg>
        <Svg w={17} h={9} className="ml-7"><path d="M.6 8.400L8.500.8l7.900 7.600" stroke="#fff" strokeWidth="1.300" /></Svg>
        <Svg w={20} h={16} className="ml-[11px] mt-1">
          <path d="M4 13Q0 13 0 9.500q0-3 3-3.500 1-5 6-5 3 0 4.500 3Q18 4 18 8v5z" fill="#fff" />
          <circle cx="14" cy="10.500" r="5.500" fill="#fff" />
          <path d="M9.800 10q.500-3.500 4.200-3.800 2 0 3.700 1.800M18.200 11.500q-.700 3.500-4.200 3.500-2 0-3.700-1.800" stroke="#1b5fc1" strokeWidth="1.500" />
          <path d="M18.500 5v4h-4zM9.500 16v-4h4z" fill="#1b5fc1" />
        </Svg>
        <Svg w={20} h={12} className="ml-[10px]"><path d="M.6.600h16.500v10.500H.6z" stroke="#fff" strokeWidth="1.200" /><path d="M3 3h12v6H3zM17.500 3.500h2v5h-2z" fill="#fff" /></Svg>
        <Svg w={16} h={16} className="ml-[12px]">
          <path d="M.5 14Q1.500 2 15.500.8M4 15Q4.500 5.500 15.500 4.500M8 15.500Q8.500 9 15.500 8.500" stroke="#ddd" strokeWidth="1.300" />
          <circle cx="13.500" cy="13.700" r="1.800" fill="#fff" />
        </Svg>
        <Svg w={21} h={17} className="ml-[11px]">
          <path d="M.6 5.500h3l4-4v13.500l-4-4h-3z" stroke="#fff" strokeWidth="1.200" /><path d="M10.500 5.500q2 3 0 6" stroke="#fff" strokeWidth="1.200" />
          <path d="M13.500 3q3.500 5.500 0 11M16.500 1q5 7.500 0 15" stroke="#8a8784" strokeWidth="1.200" />
        </Svg>
        <T w={24} className="ml-[15px] text-[15.5px]">ESP</T>
        <div className="ml-[18px] flex w-[72px] flex-col items-center text-[15.5px] leading-[23px]">
          <T w={72}>08:06 p. m.</T>
          <T w={61} className="mr-[2px]">8/9/2018</T>
        </div>
        <div className="relative ml-[22px] h-[30px] w-[30px] self-start">
          <Svg w={20} h={20} className="mt-[15px]"><path d="M0 0h20v16H9l-4 4v-4H0z" fill="#fff" /><path d="M4 4.500h12M4 8h12M4 11.500h8" stroke="#35312b" strokeWidth="1.200" /></Svg>
          <div className="absolute left-[9px] top-[24px] flex size-[21px] items-center justify-center rounded-full border border-[#8a8784] bg-[#35322e] text-[14px] font-semibold leading-none">3</div>
        </div>
        <div className="ml-[16px] mr-[5px] h-[50px] w-px bg-[#7b7874]" />
      </div>
    </footer>
  );
}

export default function App() {
  return (
    <div className="h-[1080px] w-[1920px] overflow-hidden font-['Open_Sans',sans-serif]">
      <Header />
      <Ribbon />
      <Document />
      <StatusBar />
      <Taskbar />
    </div>
  );
}
